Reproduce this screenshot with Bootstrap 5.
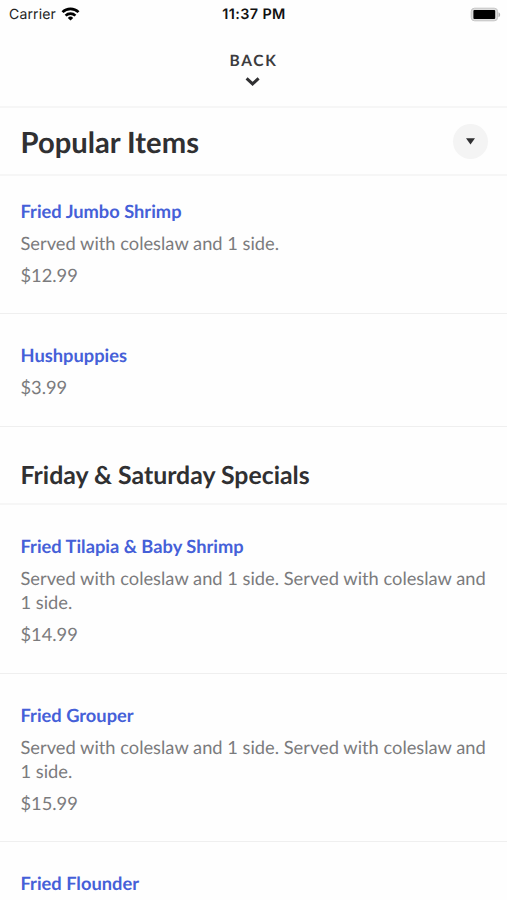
<!DOCTYPE html>
<html lang="en">
<head>
<meta charset="utf-8">
<meta name="viewport" content="width=device-width, initial-scale=1">
<title>Popular Items</title>
<link href="https://cdn.jsdelivr.net/npm/bootstrap@5.3.0/dist/css/bootstrap.min.css" rel="stylesheet">
<style>
body { font-family: Lato, sans-serif; color: #303032; background: #fefefe; height: 900px; overflow: hidden; text-rendering: geometricPrecision; }
.status-bar { font-family: Inter, sans-serif; height: 28px; font-size: 14px; line-height: 28px; color: #222; padding: 0 6px 0 9px; }
.carrier { letter-spacing: .15px; padding-top: 1px; }
.status-time { font-size: 14.4px; letter-spacing: .4px; font-weight: 600; color: #111; padding-right: 2px; }
.rule { border-bottom: 2px solid #f6f6f6; }
.back-bar { height: 79.5px; padding-top: 22px; }
.back-label { font-size: 15.5px; line-height: 22px; letter-spacing: 1.7px; font-weight: 700; color: #3c3c3e; }
.page-head { height: 68.5px; padding: 2px 19px 0 20.5px; }
.page-title { font-size: 29.2px; line-height: 36px; font-weight: 700; padding-top: 2px; }
.toggle-btn { width: 35px; height: 35px; background: #f4f4f4; }
.menu-item { padding: 29.2px 18px 26px 20.5px; border-bottom: 1px solid #efefef; font-size: 18.3px; line-height: 24.4px; color: #7b7b7d; }
.menu-item:first-child { padding-top: 23.3px; }
.menu-item > * + * { margin-top: 7.4px; }
.item-name { font-size: 18.3px; line-height: 24.4px; font-weight: 700; color: #4560d8; }
.section-head { height: 78.4px; padding: 31px 20.5px 0; }
.section-title { font-size: 24.85px; line-height: 34px; font-weight: 700; }
</style>
<script src="https://cdn.jsdelivr.net/npm/bootstrap@5.3.0/dist/js/bootstrap.bundle.min.js"></script>
</head>
<body>
<div class="status-bar row g-0 align-items-center">
  <div class="col d-flex align-items-center">
    <span class="carrier">Carrier</span>
    <svg class="ms-1" width="20" height="16" viewBox="0 0 20 16" fill="none" stroke="#000" stroke-width="2.7"><path d="M2.5 5.1a11.3 11.3 0 0 1 16 0M5.6 8.6a7 7 0 0 1 9.8 0"/><path d="M10.5 13.6 7.8 10.9a3.8 3.8 0 0 1 5.4 0z" fill="#000" stroke="none"/></svg>
  </div>
  <div class="col-auto status-time">11:37 PM</div>
  <div class="col d-flex justify-content-end">
    <svg width="31" height="16" viewBox="0 0 31 16"><rect x="1.2" y="1.2" width="26.4" height="12.6" rx="3.4" fill="#ddd" stroke="#c4c4c4"/><rect x="3.4" y="2.9" width="21.8" height="9" rx="1"/><path d="M28.5 5.2c2.2.7 2.2 4.3 0 5z" fill="#b5b5b5"/></svg>
  </div>
</div>
<nav class="back-bar rule d-flex flex-column align-items-center">
  <a class="back-label text-decoration-none" href="#">BACK</a>
  <svg class="mt-1 me-1" width="16" height="12" viewBox="0 0 16 12" fill="none" stroke="#303032" stroke-width="3"><path d="m2.6 2.4 6 5.5 6-5.5"/></svg>
</nav>
<header class="page-head rule d-flex align-items-center justify-content-between">
  <h1 class="page-title m-0">Popular Items</h1>
  <button class="toggle-btn btn rounded-circle border-0 p-0 d-flex align-items-center justify-content-center" aria-label="Choose section"><svg width="9" height="7" viewBox="0 0 9 7"><path d="M0 .3h9L4.5 6.5z" fill="#303032"/></svg></button>
</header>
<main>
  <article class="menu-item"><h3 class="item-name mb-0">Fried Jumbo Shrimp</h3><p class="mb-0">Served with coleslaw and 1 side.</p><p class="mb-0">$12.99</p></article>
  <article class="menu-item"><h3 class="item-name mb-0">Hushpuppies</h3><p class="mb-0">$3.99</p></article>
  <div class="section-head rule"><h2 class="section-title m-0">Friday &amp; Saturday Specials</h2></div>
  <article class="menu-item"><h3 class="item-name mb-0">Fried Tilapia &amp; Baby Shrimp</h3><p class="mb-0">Served with coleslaw and 1 side. Served with coleslaw and 1 side.</p><p class="mb-0">$14.99</p></article>
  <article class="menu-item"><h3 class="item-name mb-0">Fried Grouper</h3><p class="mb-0">Served with coleslaw and 1 side. Served with coleslaw and 1 side.</p><p class="mb-0">$15.99</p></article>
  <article class="menu-item"><h3 class="item-name mb-0">Fried Flounder</h3></article>
</main>
</body>
</html>
